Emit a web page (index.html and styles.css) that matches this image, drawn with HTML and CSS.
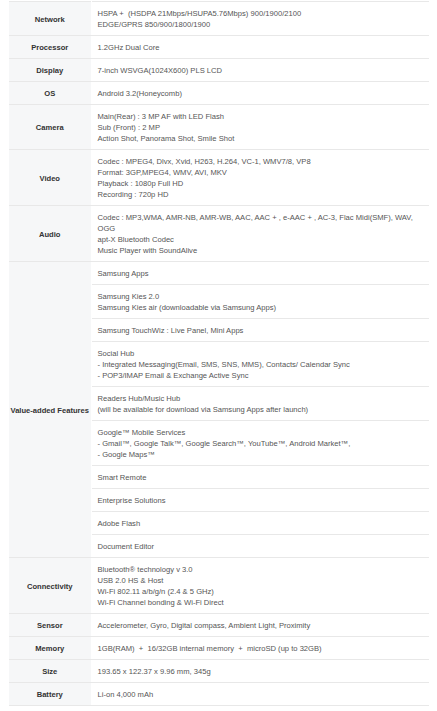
FILE: index.html
```html
<!DOCTYPE html>
<html>
<head>
<meta charset="utf-8">
<link rel="stylesheet" href="styles.css">
</head>
<body>
<table class="spec">
<colgroup><col class="col-head"><col class="col-body"></colgroup>
<tbody>
<tr><th>Network</th><td>HSPA + &nbsp;(HSDPA 21Mbps/HSUPA5.76Mbps) 900/1900/2100<br>EDGE/GPRS 850/900/1800/1900</td></tr>
<tr><th>Processor</th><td>1.2GHz Dual Core</td></tr>
<tr><th>Display</th><td>7-inch WSVGA(1024X600) PLS LCD</td></tr>
<tr><th>OS</th><td>Android 3.2(Honeycomb)</td></tr>
<tr><th>Camera</th><td>Main(Rear) : 3 MP AF with LED Flash<br>Sub (Front) : 2 MP<br>Action Shot, Panorama Shot, Smile Shot</td></tr>
<tr><th>Video</th><td>Codec : MPEG4, Dlvx, Xvid, H263, H.264, VC-1, WMV7/8, VP8<br>Format: 3GP,MPEG4, WMV, AVI, MKV<br>Playback : 1080p Full HD<br>Recording : 720p HD</td></tr>
<tr><th>Audio</th><td>Codec : MP3,WMA, AMR-NB, AMR-WB, AAC, AAC + , e-AAC + , AC-3, Flac Midi(SMF), WAV, OGG<br>apt-X Bluetooth Codec<br>Music Player with SoundAlive</td></tr>
<tr><th rowspan="10">Value-added Features</th><td>Samsung Apps</td></tr>
<tr><td>Samsung Kies 2.0<br>Samsung Kies air (downloadable via Samsung Apps)</td></tr>
<tr><td>Samsung TouchWiz : Live Panel, Mini Apps</td></tr>
<tr><td>Social Hub<br>- Integrated Messaging(Email, SMS, SNS, MMS), Contacts/ Calendar Sync<br>- POP3/IMAP Email &amp; Exchange Active Sync</td></tr>
<tr><td>Readers Hub/Music Hub<br>(will be available for download via Samsung Apps after launch)</td></tr>
<tr><td>Google™ Mobile Services<br>- Gmail™, Google Talk™, Google Search™, YouTube™, Android Market™,<br>- Google Maps™</td></tr>
<tr><td>Smart Remote</td></tr>
<tr><td>Enterprise Solutions</td></tr>
<tr><td>Adobe Flash</td></tr>
<tr><td>Document Editor</td></tr>
<tr><th>Connectivity</th><td>Bluetooth® technology v 3.0<br>USB 2.0 HS &amp; Host<br>Wi-Fi 802.11 a/b/g/n (2.4 &amp; 5 GHz)<br>Wi-Fi Channel bonding &amp; Wi-Fi Direct</td></tr>
<tr><th>Sensor</th><td>Accelerometer, Gyro, Digital compass, Ambient Light, Proximity</td></tr>
<tr><th>Memory</th><td>1GB(RAM) &nbsp;+ &nbsp;16/32GB internal memory &nbsp;+ &nbsp;microSD (up to 32GB)</td></tr>
<tr><th>Size</th><td>193.65 x 122.37 x 9.96 mm, 345g</td></tr>
<tr><th>Battery</th><td>Li-on 4,000 mAh</td></tr>
</tbody>
</table>
</body>
</html>
```
FILE: styles.css
```css
html, body {
  margin: 0;
  background: #ffffff;
}
body {
  padding: 1px 8px 0 9px;
  font-family: "Liberation Sans", Arial, sans-serif;
  font-size: 7.6px;
  line-height: 11px;
  color: #555555;
}
.spec {
  width: 420px;
  border-collapse: collapse;
  border-spacing: 0;
  table-layout: fixed;
}
.col-head {
  width: 82px;
}
.spec th,
.spec td {
  border-top: 1px solid #e8e8e8;
  border-bottom: 1px solid #e8e8e8;
  padding: 6px 6px 5px;
  vertical-align: middle;
}
.spec th {
  background: #f6f7f8;
  color: #333333;
  font-weight: bold;
  text-align: center;
  white-space: nowrap;
  border-right: 1px solid #ffffff;
  padding: 6px 0 5px;
}
.spec td {
  text-align: left;
  background: #ffffff;
}
```
